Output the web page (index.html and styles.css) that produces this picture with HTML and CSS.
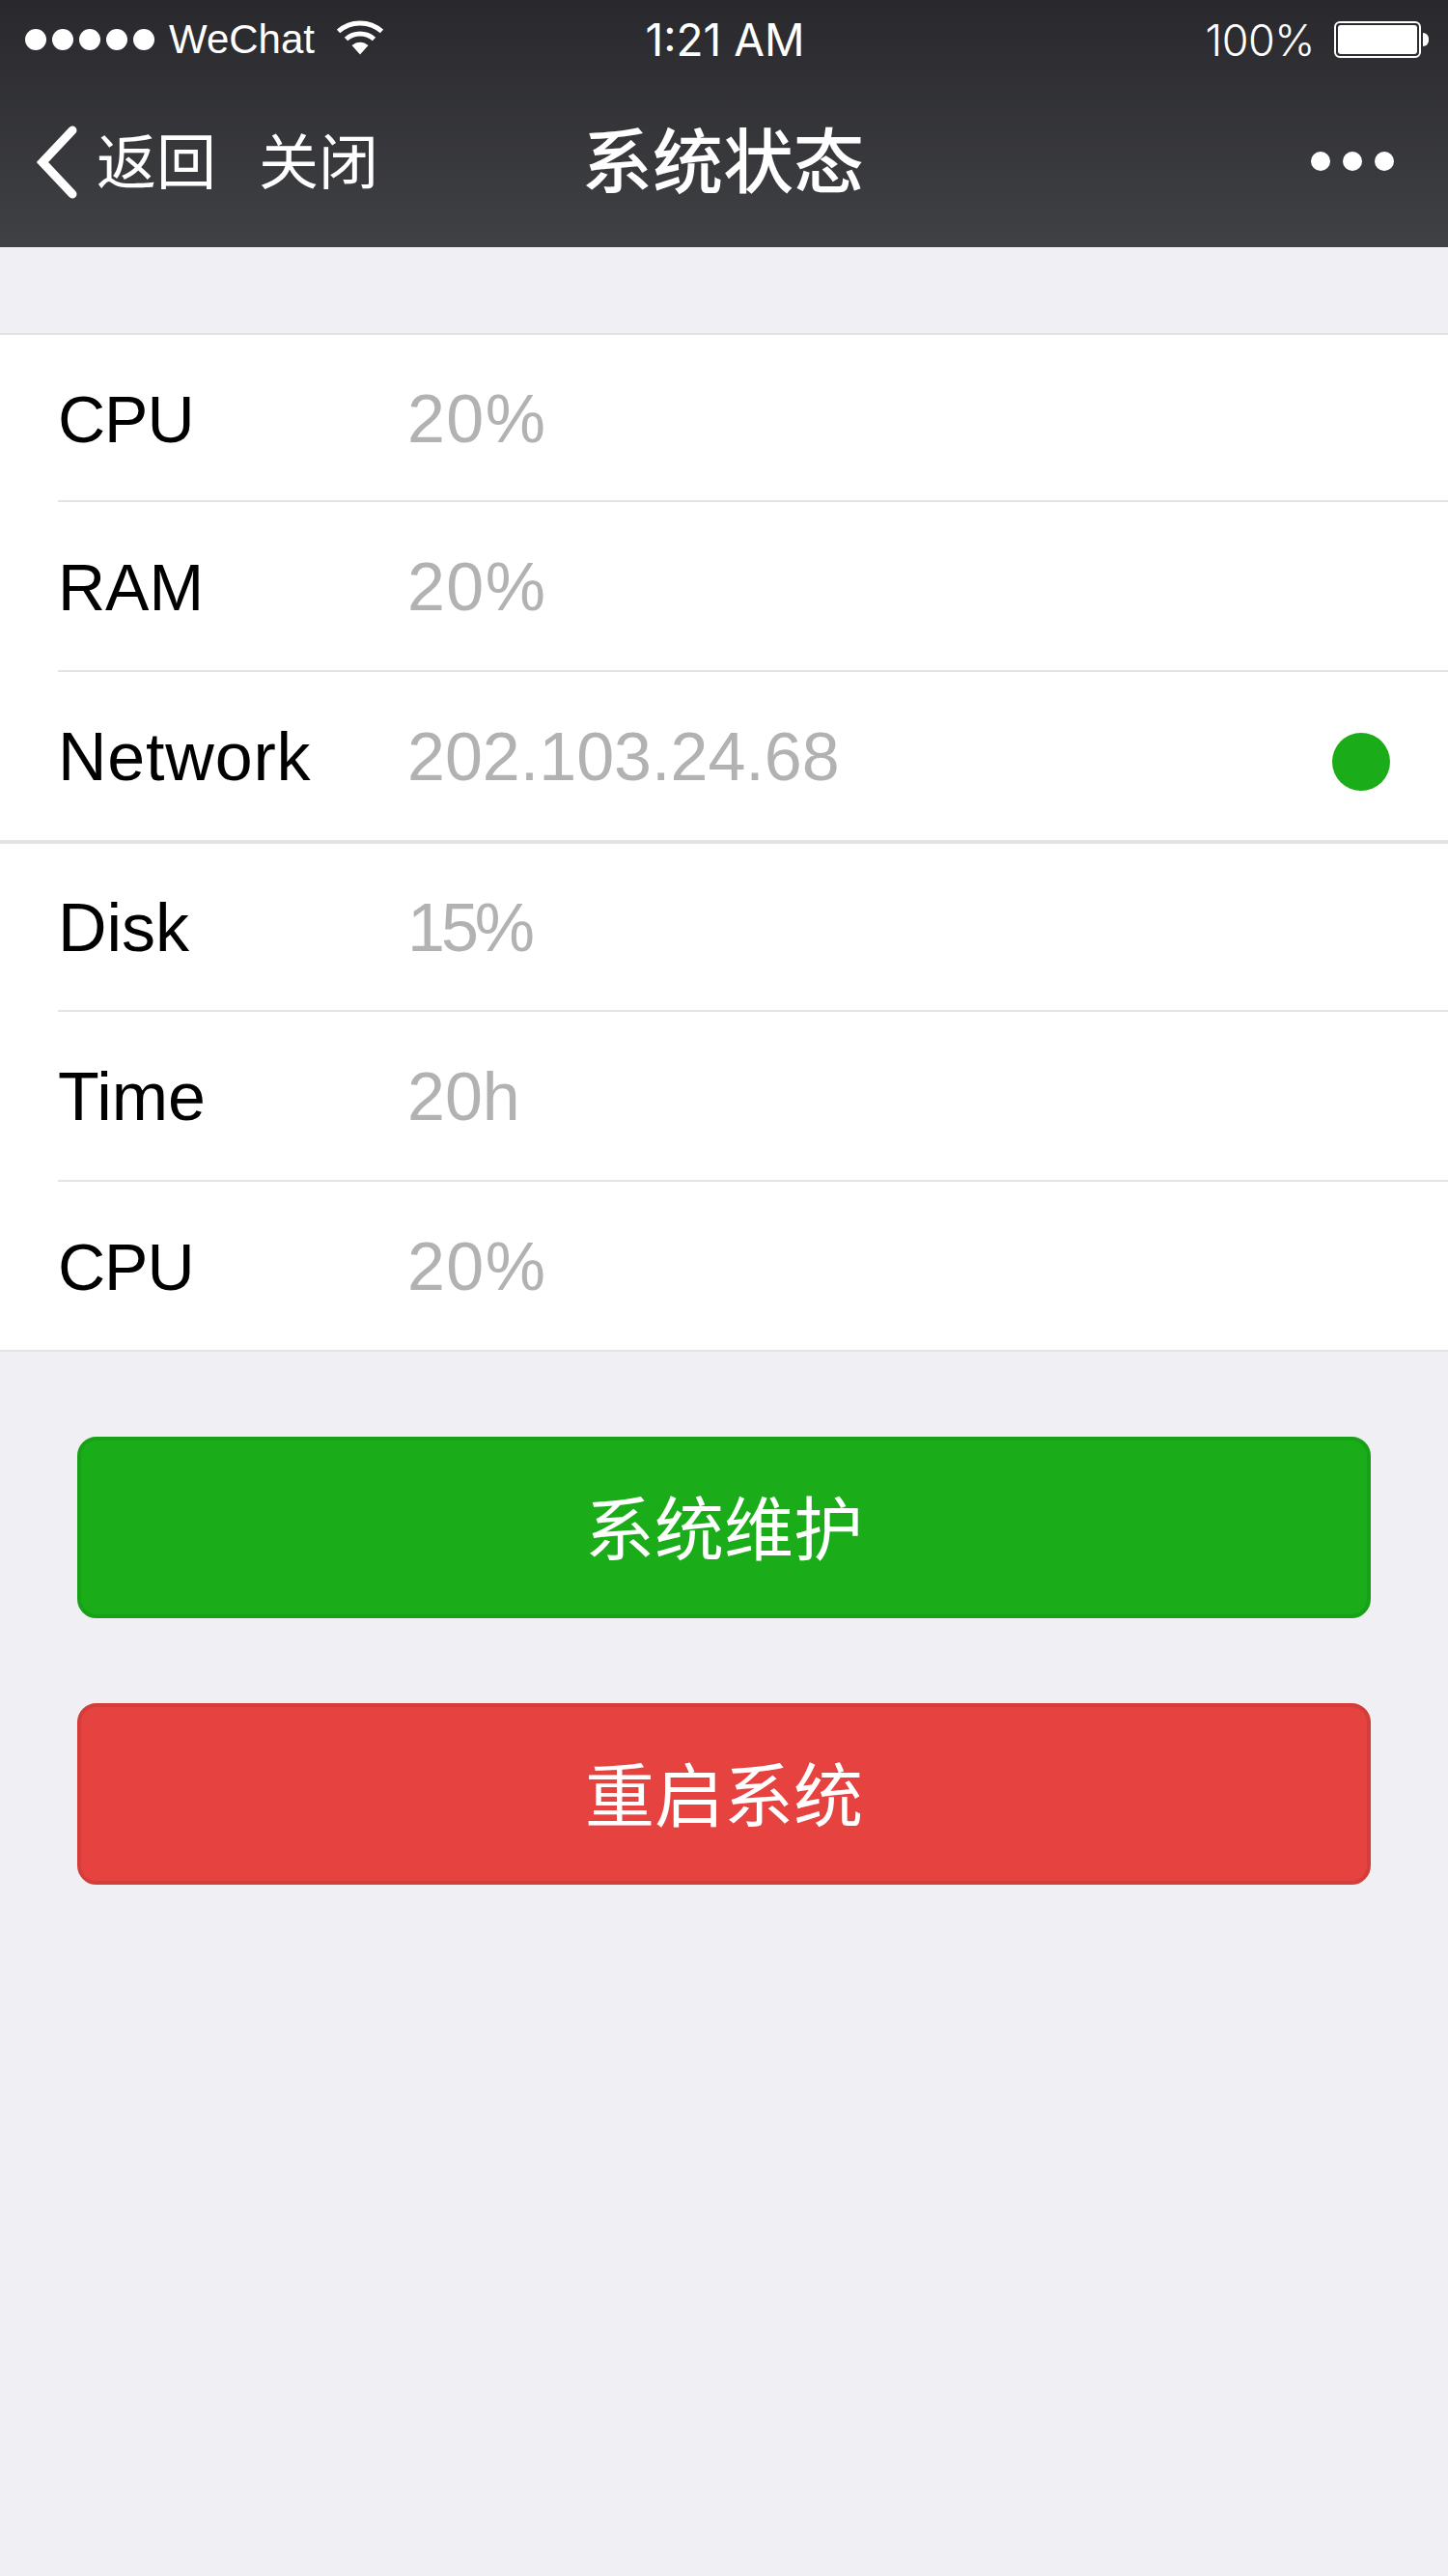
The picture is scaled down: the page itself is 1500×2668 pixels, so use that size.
FILE: index.html
```html
<!DOCTYPE html>
<html lang="zh-CN">
<head>
<meta charset="UTF-8">
<meta name="viewport" content="width=device-width, initial-scale=1.0">
<title>系统状态</title>
<link rel="stylesheet" href="styles.css">
</head>
<body>
  <div class="header">
    <div class="statusbar">
      <div class="status-left">
        <span class="signal"><i></i><i></i><i></i><i></i><i></i></span>
        <span class="carrier">WeChat</span>
        <svg class="wifi" width="48" height="36" viewBox="0 0 48 36" fill="none" stroke="#fff" stroke-width="5">
          <path d="M1.5 11.5C14 0 34 0 46.500 11.500"/>
          <path d="M9.500 19.500C17.500 12 30.500 12 38.500 19.500"/>
          <path d="M15.500 26L24 35.500L32.500 26C27.500 21.500 20.500 21.500 15.500 26Z" fill="#fff" stroke="none"/>
        </svg>
      </div>
      <div class="clock">1:21 AM</div>
      <div class="status-right">
        <span class="percent">100%</span>
        <span class="battery"><span class="battery-fill"></span></span>
        <span class="battery-nub"></span>
      </div>
    </div>
    <div class="navbar">
      <div class="nav-left">
        <svg class="back" width="44" height="76" viewBox="0 0 44 76" fill="none" stroke="#fff" stroke-width="9" stroke-linecap="round">
          <path d="M37 5L6 38L37 71"/>
        </svg>
        <span class="nav-link">返回</span>
        <span class="nav-link close">关闭</span>
      </div>
      <div class="nav-title">系统状态</div>
      <div class="nav-more"><i></i><i></i><i></i></div>
    </div>
  </div>

  <div class="list">
    <div class="group">
      <div class="row"><span class="label caps">CPU</span><span class="value pct">20%</span></div>
      <div class="row"><span class="label caps-wide">RAM</span><span class="value pct">20%</span></div>
      <div class="row"><span class="label long">Network</span><span class="value">202.103.24.68</span><span class="status-dot"></span></div>
    </div>
    <div class="group">
      <div class="row"><span class="label">Disk</span><span class="value narrow">15%</span></div>
      <div class="row"><span class="label">Time</span><span class="value">20h</span></div>
      <div class="row"><span class="label caps">CPU</span><span class="value pct">20%</span></div>
    </div>
  </div>

  <div class="actions">
    <button class="btn btn-green">系统维护</button>
    <button class="btn btn-red">重启系统</button>
  </div>
</body>
</html>
```

FILE: styles.css
```css
body {
  margin: 0;
  min-height: 2668px;
  background-color: #efeff4;
  font-family: "Liberation Sans", Arial, "Noto Sans CJK SC", sans-serif;
}

.header {
  height: 256px;
  background: linear-gradient(#29292d, #404145);
  color: #fff;
}

.statusbar {
  height: 82px;
  padding: 0 20px 0 26px;
  display: grid;
  grid-template-columns: 1fr auto 1fr;
  align-items: center;
}

.status-left {
  display: flex;
  align-items: center;
}

.signal {
  display: flex;
  gap: 6px;
}

.signal i {
  width: 22px;
  height: 22px;
  border-radius: 50%;
  background-color: #fff;
}

.carrier {
  margin-left: 15px;
  font-size: 42px;
}

.wifi {
  margin-left: 23px;
  margin-top: -5px;
}

.clock {
  font-family: "Inter", sans-serif;
  font-size: 46px;
  margin-right: 4px;
}

.status-right {
  display: flex;
  align-items: center;
  justify-content: flex-end;
}

.percent {
  font-family: "Inter", sans-serif;
  font-weight: 300;
  font-size: 45px;
  letter-spacing: -0.5px;
  margin-right: 20px;
}

.battery {
  width: 90px;
  height: 38px;
  box-sizing: border-box;
  border: 2px solid #fff;
  border-radius: 6px;
  padding: 2px;
  display: flex;
}

.battery-fill {
  flex: 1;
  background-color: #fff;
  border-radius: 3px;
}

.battery-nub {
  width: 6px;
  height: 14px;
  margin-left: 2px;
  background-color: #fff;
  border-radius: 0 7px 7px 0;
}

.navbar {
  height: 164px;
  padding: 0 56px 10px 38px;
  display: grid;
  grid-template-columns: 1fr auto 1fr;
  align-items: center;
  font-family: "Noto Sans CJK SC", sans-serif;
}

.nav-left {
  display: flex;
  align-items: center;
}

.back {
  margin-top: 7px;
  margin-right: 18px;
}

.nav-link {
  font-size: 62px;
}

.close {
  margin-left: 44px;
}

.nav-title {
  font-size: 73px;
  font-weight: 500;
  margin: 0 0 4px 16px;
}

.nav-more {
  margin-top: 6px;
  display: flex;
  justify-content: flex-end;
  gap: 13px;
}

.nav-more i {
  width: 20px;
  height: 20px;
  border-radius: 50%;
  background-color: #fff;
}

.list {
  margin-top: 89px;
}

.group {
  background-color: #fff;
  border-top: 2px solid #e3e3e3;
}

.group:last-child {
  border-bottom: 2px solid #e3e3e3;
}

.group + .group {
  border-top-width: 4px;
}

.row {
  box-sizing: border-box;
  height: 176px;
  padding: 2px 60px 0 0;
  margin-left: 60px;
  display: flex;
  align-items: center;
  border-top: 2px solid #e3e3e3;
}

.row:first-child {
  height: 171px;
  border-top: none;
}

.group + .group .row:first-child {
  height: 172px;
}

.label {
  width: 362px;
  font-size: 70px;
  color: #000;
}

.caps {
  font-size: 68px;
  letter-spacing: -1px;
}

.caps-wide {
  font-size: 68px;
}

.long {
  letter-spacing: 0.8px;
}

.value {
  flex: 1;
  font-size: 70px;
  color: #b2b2b2;
}

/* the original font sets these a little wider or narrower */
.pct {
  letter-spacing: 1.4px;
}

.narrow {
  letter-spacing: -4px;
}

.status-dot {
  width: 60px;
  height: 60px;
  margin-top: 10px;
  border-radius: 50%;
  background-color: #1aad19;
}

.actions {
  padding: 88px 80px 0;
  display: flex;
  flex-direction: column;
  gap: 88px;
}

.btn {
  height: 188px;
  padding: 0 0 8px;
  border-radius: 20px;
  border: 4px solid;
  color: #fff;
  font-family: "Noto Sans CJK SC", sans-serif;
  font-size: 72px;
}

.btn-green {
  background-color: #1aad19;
  border-color: #18a118;
}

.btn-red {
  background-color: #e64340;
  border-color: #d33e3b;
}
```
